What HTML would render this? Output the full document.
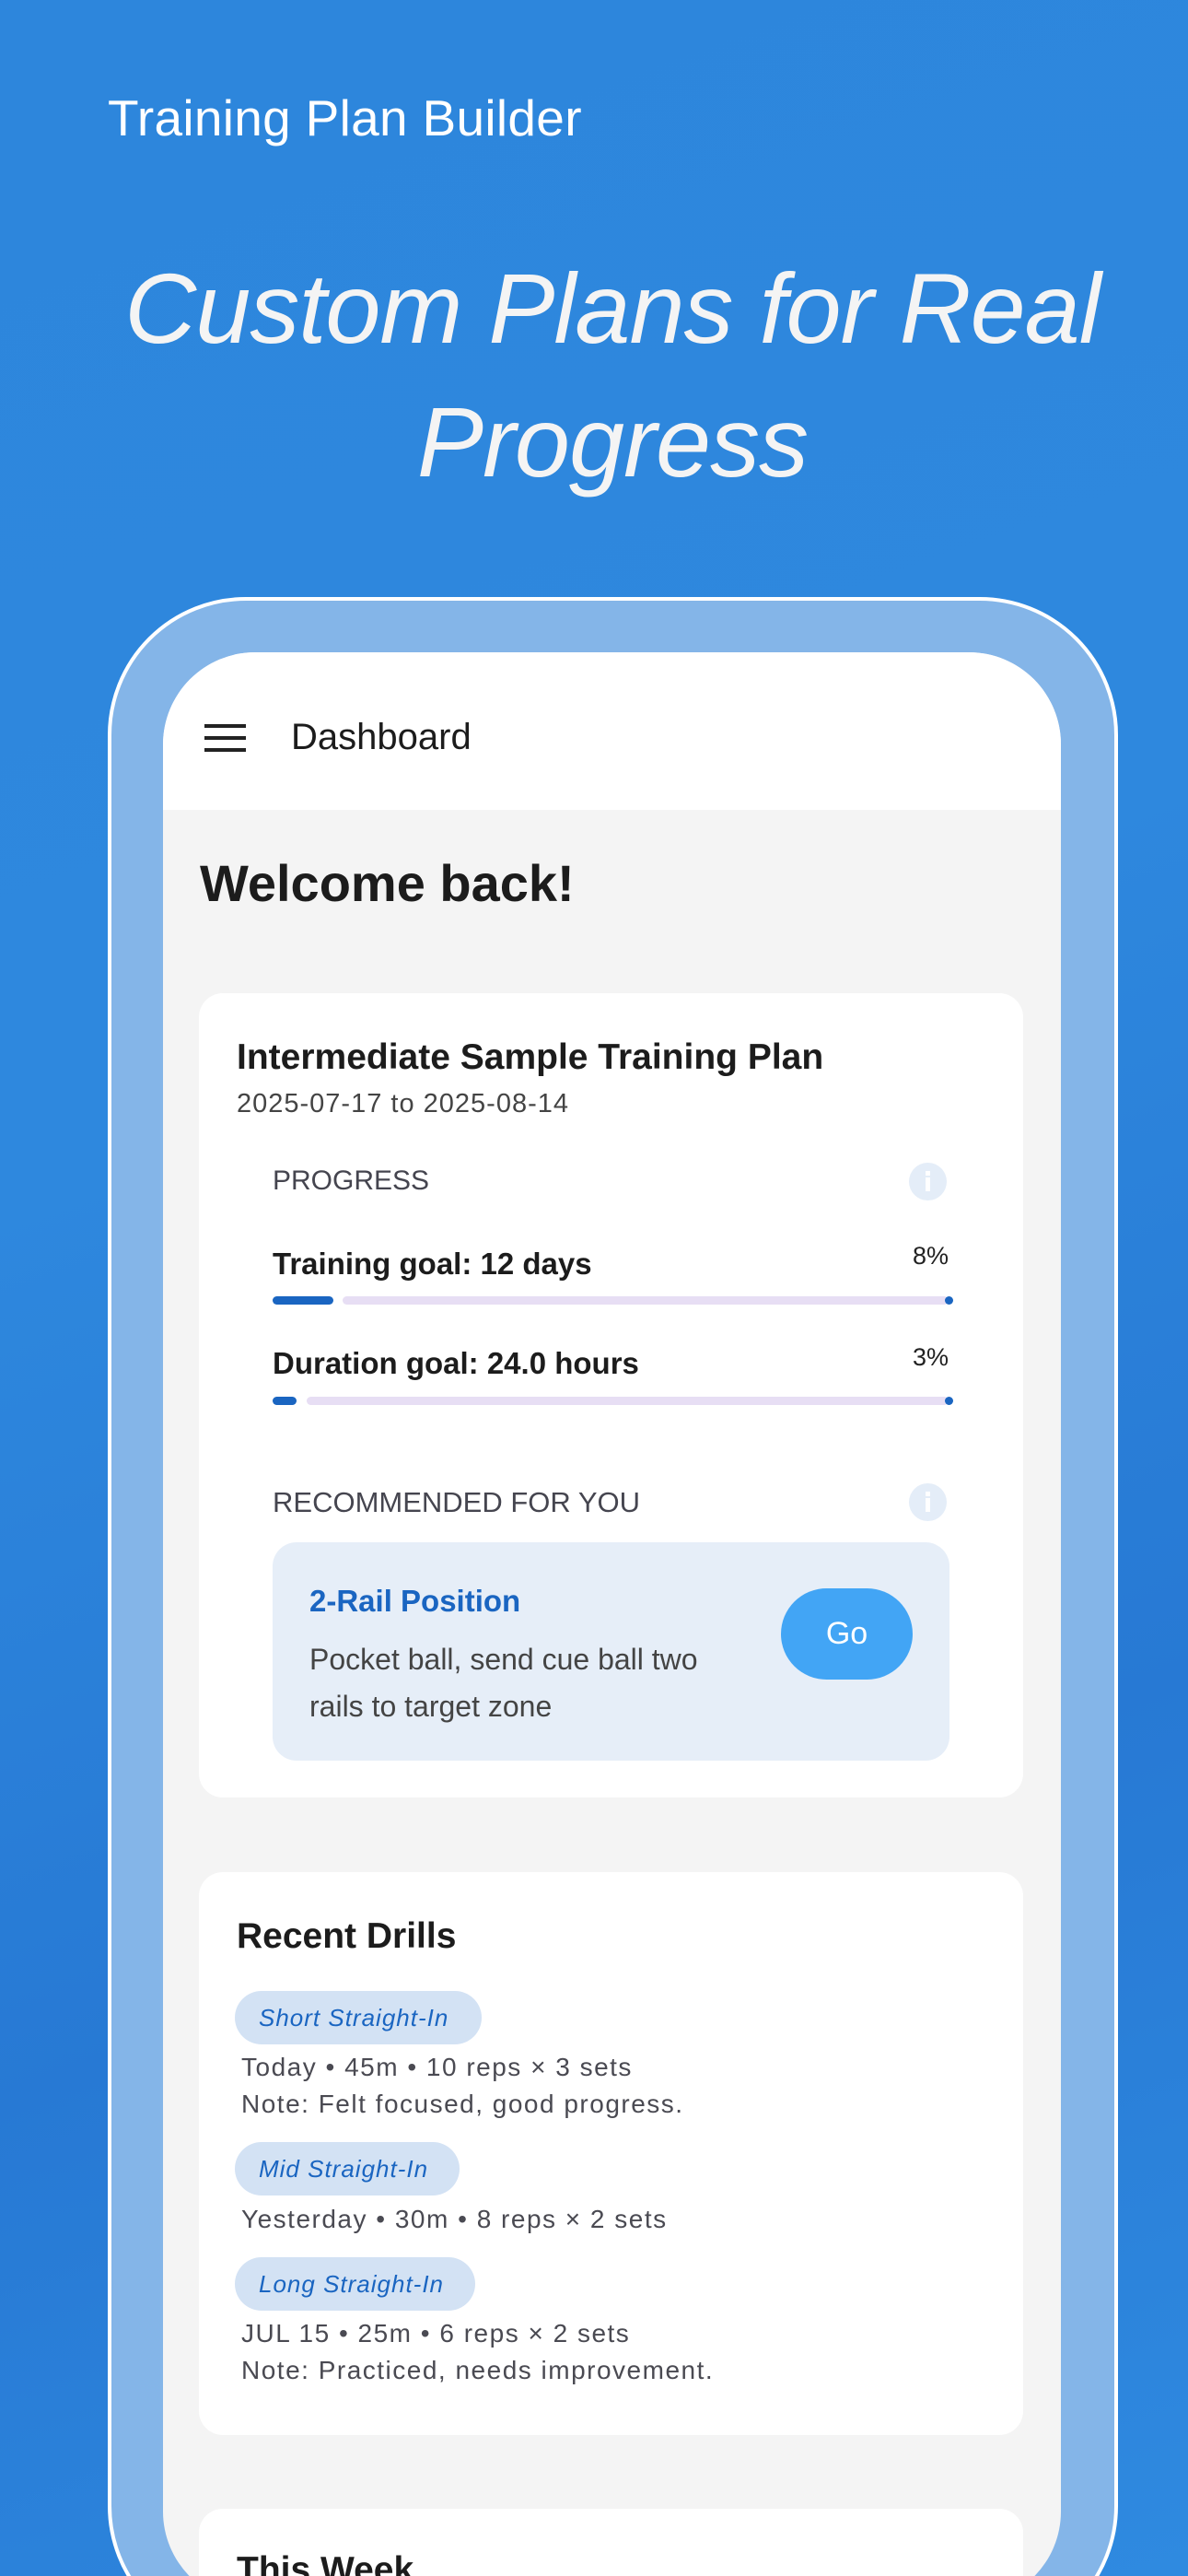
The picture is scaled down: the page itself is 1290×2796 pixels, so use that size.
<!DOCTYPE html>
<html style="overflow:hidden;width:1290px;height:2796px"><head><meta charset="utf-8"><style>
*{margin:0;padding:0;box-sizing:border-box}
body{width:1290px;height:2796px;overflow:hidden;font-family:"Liberation Sans",sans-serif;background:linear-gradient(160deg,#2d86dc 0%,#2e88de 40%,#2779d4 70%,#2f8ae0 100%);position:relative}
#wrap{position:absolute;left:0;top:0;width:1290px;height:2796px;overflow:hidden}
.a{position:absolute;white-space:nowrap}
.title{left:117px;top:96px;font-size:55px;color:#fff;letter-spacing:0.3px}
.h{left:116px;width:1098px;text-align:center;font-size:108px;font-style:italic;color:#f4f4f4;letter-spacing:-1px;white-space:nowrap}
.phone{left:117px;top:648px;width:1097px;height:2222px;border:4px solid #fff;border-radius:150px;background:#84b5e8}
.screen{left:177px;top:708px;width:975px;height:2118px;border-radius:100px;background:#f4f4f4;overflow:hidden}
.bar{position:absolute;left:0;top:0;width:975px;height:171px;background:#fff}
.card{position:absolute;left:39px;width:895px;background:#fff;border-radius:26px}
.lab{color:#45454f}
.info{position:absolute;width:41px;height:41px;border-radius:50%;background:#e4edf8}
.info:after{content:"";position:absolute;left:18px;top:16px;width:5px;height:15px;background:#fff}
.info:before{content:"";position:absolute;left:18px;top:9px;width:5px;height:5px;background:#fff}
.gl{font-size:33px;font-weight:bold;color:#1c1c1c}
.pct{font-size:27px;color:#222}
.trk{position:absolute;height:9px;border-radius:5px;background:#e7def4}
.fill{position:absolute;height:9px;border-radius:5px;background:#1a65c1}
.dot{position:absolute;width:9px;height:9px;border-radius:50%;background:#1a65c1}
.chip{position:absolute;left:39px;height:58px;border-radius:29px;background:#d3e2f4;color:#1a65c1;font-style:italic;font-size:26px;line-height:58px;padding-left:26px;letter-spacing:1px}
.meta{font-size:28px;color:#4a4a52;letter-spacing:1.5px}
</style></head><body><div id="wrap">
<div class="a title">Training Plan Builder</div>
<div class="a h" style="top:272px">Custom Plans for Real</div>
<div class="a h" style="top:417px">Progress</div>
<div class="a phone"></div>
<div class="a screen">
 <div class="bar">
  <div class="a" style="left:45px;top:78px;width:45px;height:4px;background:#222;box-shadow:0 13px 0 #222,0 26px 0 #222"></div>
  <div class="a" style="left:139px;top:70px;font-size:40px;color:#1c1c1c">Dashboard</div>
 </div>
 <div class="a" style="left:40px;top:218px;font-size:56px;font-weight:bold;color:#1c1c1c">Welcome back!</div>
 <div class="card" style="top:370px;height:873px">
  <div class="a" style="left:41px;top:48px;font-size:39px;font-weight:bold;color:#1c1c1c">Intermediate Sample Training Plan</div>
  <div class="a" style="left:41px;top:104px;font-size:29px;color:#444;letter-spacing:1px">2025-07-17 to 2025-08-14</div>
  <div class="a lab" style="left:80px;top:187px;font-size:30px">PROGRESS</div>
  <div class="info" style="left:771px;top:184px"></div>
  <div class="a gl" style="left:80px;top:275px">Training goal: 12 days</div>
  <div class="a pct" style="left:775px;top:270px">8%</div>
  <div class="fill" style="left:80px;top:329px;width:66px"></div>
  <div class="trk" style="left:156px;top:329px;width:658px"></div>
  <div class="dot" style="left:810px;top:329px"></div>
  <div class="a gl" style="left:80px;top:383px">Duration goal: 24.0 hours</div>
  <div class="a pct" style="left:775px;top:380px">3%</div>
  <div class="fill" style="left:80px;top:438px;width:26px"></div>
  <div class="trk" style="left:117px;top:438px;width:697px"></div>
  <div class="dot" style="left:810px;top:438px"></div>
  <div class="a lab" style="left:80px;top:535px;font-size:31px">RECOMMENDED FOR YOU</div>
  <div class="info" style="left:771px;top:532px"></div>
  <div class="a" style="left:80px;top:596px;width:735px;height:237px;border-radius:26px;background:#e6eef8">
   <div class="a" style="left:40px;top:45px;font-size:33px;font-weight:bold;color:#1a65c1">2-Rail Position</div>
   <div class="a" style="left:40px;top:102px;font-size:32px;line-height:51px;color:#444;white-space:normal;width:480px">Pocket ball, send cue ball two rails to target zone</div>
   <div class="a" style="left:552px;top:50px;width:143px;height:99px;border-radius:50px;background:#42a5f5;color:#fff;font-size:34px;line-height:99px;text-align:center">Go</div>
  </div>
 </div>
 <div class="card" style="top:1324px;height:611px">
  <div class="a" style="left:41px;top:48px;font-size:39px;font-weight:bold;color:#1c1c1c">Recent Drills</div>
  <div class="chip" style="top:129px;width:268px">Short Straight-In</div>
  <div class="a meta" style="left:46px;top:196px">Today • 45m • 10 reps × 3 sets</div>
  <div class="a meta" style="left:46px;top:236px">Note: Felt focused, good progress.</div>
  <div class="chip" style="top:293px;width:244px">Mid Straight-In</div>
  <div class="a meta" style="left:46px;top:361px">Yesterday • 30m • 8 reps × 2 sets</div>
  <div class="chip" style="top:418px;width:261px">Long Straight-In</div>
  <div class="a meta" style="left:46px;top:485px">JUL 15 • 25m • 6 reps × 2 sets</div>
  <div class="a meta" style="left:46px;top:525px">Note: Practiced, needs improvement.</div>
 </div>
 <div class="card" style="top:2015px;height:400px">
  <div class="a" style="left:41px;top:45px;font-size:39px;font-weight:bold;color:#1c1c1c">This Week</div>
 </div>
</div>
</div></body></html>
